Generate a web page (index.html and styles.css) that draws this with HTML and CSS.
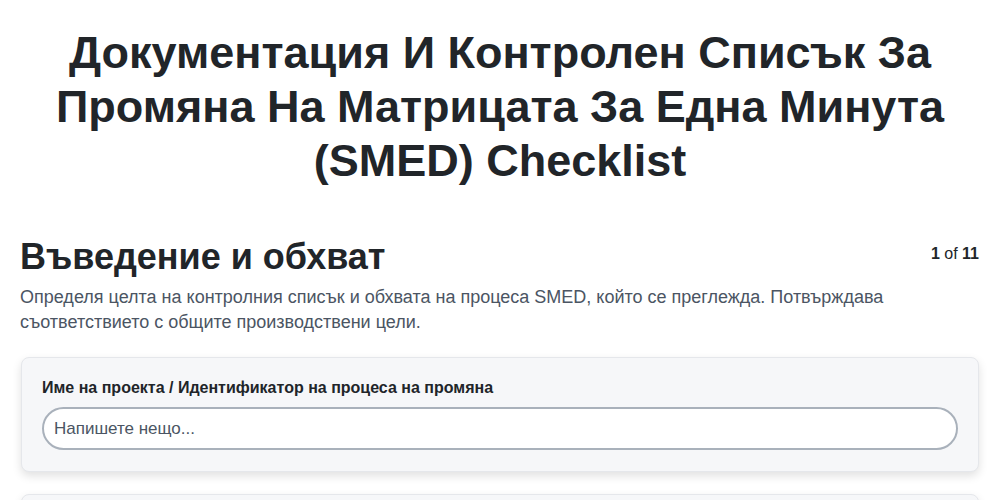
FILE: index.html
```html
<!DOCTYPE html>
<html>
<head>
  <meta charset="utf-8">
  <title>SMED Checklist</title>
  <link rel="stylesheet" href="styles.css">
</head>
<body>
  <div class="page">
    <h1 class="doc-title">Документация И Контролен Списък За Промяна На Матрицата За Една Минута (SMED) Checklist</h1>

    <section class="step">
      <div class="step-head">
        <h2>Въведение и обхват</h2>
        <span class="counter"><b>1</b> of <b>11</b></span>
      </div>
      <p class="step-desc">Определя целта на контролния списък и обхвата на процеса SMED, който се преглежда. Потвърждава съответствието с общите производствени цели.</p>

      <div class="card">
        <label for="project">Име на проекта / Идентификатор на процеса на промяна</label>
        <input type="text" id="project" name="project" placeholder="Напишете нещо...">
      </div>

      <div class="card">
        <label for="date">Дата на прегледа</label>
        <input type="text" id="date" name="date" placeholder="Напишете нещо...">
      </div>
    </section>
  </div>
</body>
</html>
```

FILE: styles.css
```css
body {
  font-family: "Liberation Sans", Arial, sans-serif;
  margin: 0;
  color: #212529;
  background: #fff;
}

.page {
  padding: 0 21px;
}

.doc-title {
  font-size: 45px;
  line-height: 54px;
  font-weight: bold;
  text-align: center;
  margin: 26px 30px 0;
}

.step {
  margin-top: 49px;
}

.step-head {
  display: flex;
  justify-content: space-between;
  align-items: flex-start;
}

.step-head h2 {
  font-size: 36px;
  line-height: 44px;
  margin: -2px 0 0 -1px;
}

.counter {
  font-size: 16px;
  margin-top: 8px;
  color: #212529;
}

.step-desc {
  font-size: 18px;
  line-height: 25px;
  color: #4b5563;
  margin: 6px 0 22px -1px;
}

.card {
  background: #f6f7f9;
  border: 1px solid #e5e7eb;
  border-radius: 8px;
  box-shadow: 0 4px 10px rgba(0, 0, 0, 0.12);
  padding: 21px 20px 21px;
  margin-bottom: 22px;
}

.card label {
  display: block;
  font-size: 16px;
  font-weight: bold;
  margin-bottom: 10px;
}

.card input[type="text"] {
  width: 100%;
  box-sizing: border-box;
  height: 43px;
  border: 2px solid #a9b1bb;
  border-radius: 22px;
  padding: 0 10px;
  font-family: inherit;
  font-size: 17px;
  color: #212529;
  background: #fff;
}

.card input::placeholder {
  color: #4b5563;
}
```
